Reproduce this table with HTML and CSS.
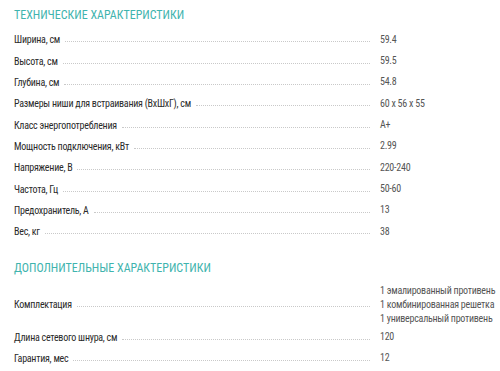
FILE: index.html
```html
<!DOCTYPE html>
<html lang="ru">
<head>
<meta charset="utf-8">
<link rel="stylesheet" href="styles.css">
</head>
<body>
<div class="specs">
  <h2 class="title">Технические характеристики</h2>
  <dl class="list">
    <div class="row"><dt>Ширина, см</dt><dd>59.4</dd></div>
    <div class="row"><dt>Высота, см</dt><dd>59.5</dd></div>
    <div class="row"><dt>Глубина, см</dt><dd>54.8</dd></div>
    <div class="row"><dt>Размеры ниши для встраивания (ВxШxГ), см</dt><dd>60 x 56 x 55</dd></div>
    <div class="row"><dt>Класс энергопотребления</dt><dd>A+</dd></div>
    <div class="row"><dt>Мощность подключения, кВт</dt><dd>2.99</dd></div>
    <div class="row"><dt>Напряжение, В</dt><dd>220-240</dd></div>
    <div class="row"><dt>Частота, Гц</dt><dd>50-60</dd></div>
    <div class="row"><dt>Предохранитель, А</dt><dd>13</dd></div>
    <div class="row"><dt>Вес, кг</dt><dd>38</dd></div>
  </dl>
  <h2 class="title title-2">Дополнительные характеристики</h2>
  <dl class="list list-2">
    <div class="row row-multi"><dt>Комплектация</dt><dd>1 эмалированный противень<br>1 комбинированная решетка<br>1 универсальный противень</dd></div>
    <div class="row"><dt>Длина сетевого шнура, см</dt><dd>120</dd></div>
    <div class="row"><dt>Гарантия, мес</dt><dd>12</dd></div>
  </dl>
</div>
</body>
</html>
```

FILE: styles.css
```css
html, body {
  margin: 0;
  padding: 0;
  background: #fff;
}
body {
  font-family: "Roboto Condensed", Roboto, "Liberation Sans", sans-serif;
  color: #333;
  overflow: hidden;
}
.specs {
  padding: 7px 0 0 14px;
  width: 486px;
}
.title {
  margin: 0;
  font-size: 12px;
  font-weight: 400;
  text-transform: uppercase;
  color: #3fb4ae;
  line-height: 16px;
}
.title-2 {
  margin-top: 18px;
}
.list {
  margin: 6px 0 0 0;
  padding: 0;
}
.list-2 {
  margin-top: 7px;
}
.row {
  display: flex;
  align-items: center;
  min-height: 21.35px;
  font-size: 10px;
  letter-spacing: -0.25px;
}
.row-multi {
  min-height: 43px;
}
.row dt {
  flex: 0 0 366px;
  display: flex;
  align-items: center;
  color: #2a2a2a;
  white-space: nowrap;
}
.row dt::after {
  content: "";
  flex: 1;
  margin: 4px 10px 0 5px;
  border-bottom: 1px dotted #c9c9c9;
}
.row dd {
  margin: 0;
  color: #555;
  line-height: 14px;
  white-space: nowrap;
}
```
